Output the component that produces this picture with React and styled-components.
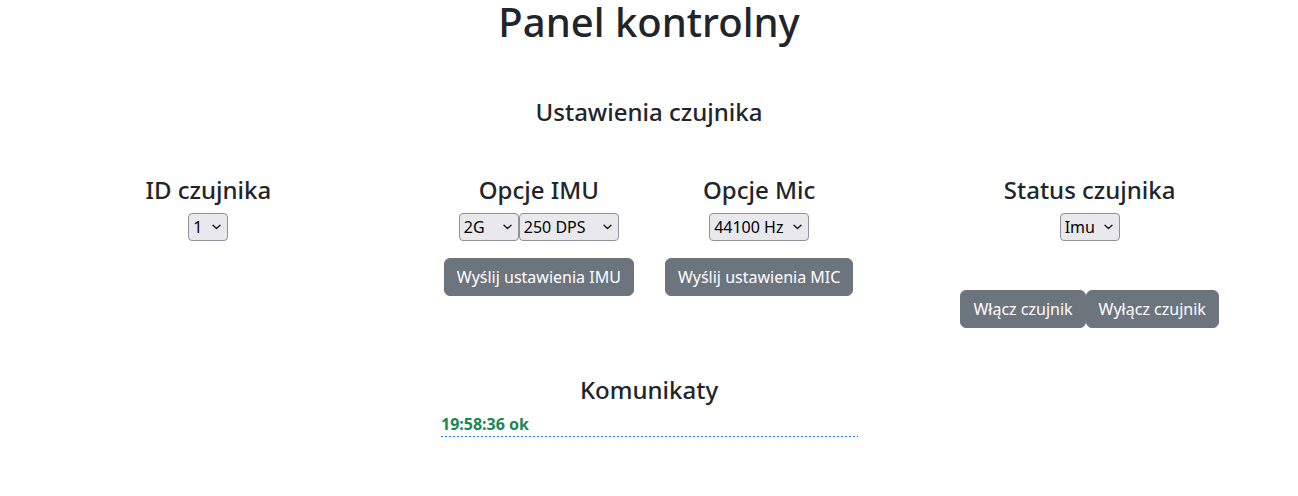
import styled, { createGlobalStyle } from "styled-components";

const colors = {
  text: "#212529",
  secondary: "#6c757d",
  success: "#198754",
  primary: "#0d6efd",
  field: "#e9e9ed",
  fieldBorder: "#8f8f9d",
};

const GlobalStyle = createGlobalStyle`
  body {
    margin: 0;
    font-family: "Noto Sans", "Open Sans", sans-serif;
    font-size: 16px;
    line-height: 1.5;
    color: ${colors.text};
    background: #fff;
    overflow-x: hidden;
  }
`;

function Chevron() {
  return (
    <ChevronIcon width="9" height="6" viewBox="0 0 9 6" aria-hidden="true">
      <path d="M1 1.2 L4.5 4.6 L8 1.2" fill="none" stroke="#1b1b1f" strokeWidth="1.4" strokeLinecap="round" strokeLinejoin="round" />
    </ChevronIcon>
  );
}

function Dropdown({ width, defaultValue, options }) {
  return (
    <SelectWrap>
      <Select $width={width} defaultValue={defaultValue}>
        {options.map((o) => (
          <option key={o}>{o}</option>
        ))}
      </Select>
      <Chevron />
    </SelectWrap>
  );
}

export default function App() {
  return (
    <Page>
      <GlobalStyle />
      <Title>Panel kontrolny</Title>
      <SectionTitle>Ustawienia czujnika</SectionTitle>
      <Row>
        <Column>
          <Heading>ID czujnika</Heading>
          <Dropdown width="40px" defaultValue="1" options={["1", "2", "3"]} />
        </Column>
        <Column>
          <Heading>Opcje IMU</Heading>
          <SelectGroup>
            <Dropdown width="60px" defaultValue="2G" options={["2G", "4G", "8G", "16G"]} />
            <Dropdown
              width="100px"
              defaultValue="250 DPS"
              options={["250 DPS", "500 DPS", "1000 DPS", "2000 DPS"]}
            />
          </SelectGroup>
          <Button $top="17px">Wyślij ustawienia IMU</Button>
        </Column>
        <Column>
          <Heading>Opcje Mic</Heading>
          <Dropdown width="100px" defaultValue="44100 Hz" options={["16000 Hz", "44100 Hz", "48000 Hz"]} />
          <Button $top="17px">Wyślij ustawienia MIC</Button>
        </Column>
        <Column>
          <Heading>Status czujnika</Heading>
          <Dropdown width="60px" defaultValue="Imu" options={["Imu", "Mic"]} />
          <ButtonPair>
            <Button>Włącz czujnik</Button>
            <Button>Wyłącz czujnik</Button>
          </ButtonPair>
        </Column>
      </Row>
      <Messages>
        <Heading>Komunikaty</Heading>
        <MessageList>
          <Message>19:58:36 ok</Message>
        </MessageList>
      </Messages>
    </Page>
  );
}

const Page = styled.div`
  width: 100%;
  text-align: center;
`;

const Title = styled.h1`
  margin: 0;
  font-size: 40px;
  font-weight: 500;
  line-height: 44px;
`;

const SectionTitle = styled.h3`
  margin: 54px 0 0;
  font-size: 24px;
  font-weight: 500;
  line-height: 1.2;
`;

const Heading = styled.h4`
  margin: 0 0 8px;
  font-size: 24px;
  font-weight: 500;
  line-height: 1.2;
`;

const Row = styled.div`
  display: grid;
  grid-template-columns: 2fr 1fr 1fr 2fr;
  margin: 49px -12px 0;
`;

const Column = styled.div`
  display: flex;
  flex-direction: column;
  align-items: center;
  padding: 0 12px;
`;

const SelectGroup = styled.div`
  display: flex;
`;

const SelectWrap = styled.div`
  position: relative;
  display: inline-flex;
`;

const Select = styled.select`
  appearance: none;
  box-sizing: border-box;
  width: ${(props) => props.$width};
  height: 28px;
  margin: 0;
  padding: 0 18px 0 4px;
  font-family: inherit;
  font-size: 16px;
  line-height: 24px;
  color: #000;
  background: ${colors.field};
  border: 1px solid ${colors.fieldBorder};
  border-radius: 4px;
`;

const ChevronIcon = styled.svg`
  position: absolute;
  right: 7px;
  top: 11px;
  pointer-events: none;
`;

const Button = styled.button`
  margin-top: ${(props) => props.$top || "0"};
  padding: 6px 12px;
  font-family: inherit;
  font-size: 16px;
  line-height: 1.5;
  color: #fff;
  background: ${colors.secondary};
  border: 1px solid ${colors.secondary};
  border-radius: 6px;
  cursor: pointer;
`;

const ButtonPair = styled.div`
  display: flex;
  margin-top: 49px;
`;

const Messages = styled.div`
  margin-top: 48px;
`;

const MessageList = styled.div`
  width: 418px;
  margin: 0 auto;
  padding-bottom: 1px;
  text-align: left;
  background-image: linear-gradient(to right, ${colors.primary} 2px, transparent 2px);
  background-size: 4px 1px;
  background-repeat: repeat-x;
  background-position: 1px bottom;
`;

const Message = styled.div`
  padding-left: 1px;
  font-weight: 700;
  color: ${colors.success};
`;
